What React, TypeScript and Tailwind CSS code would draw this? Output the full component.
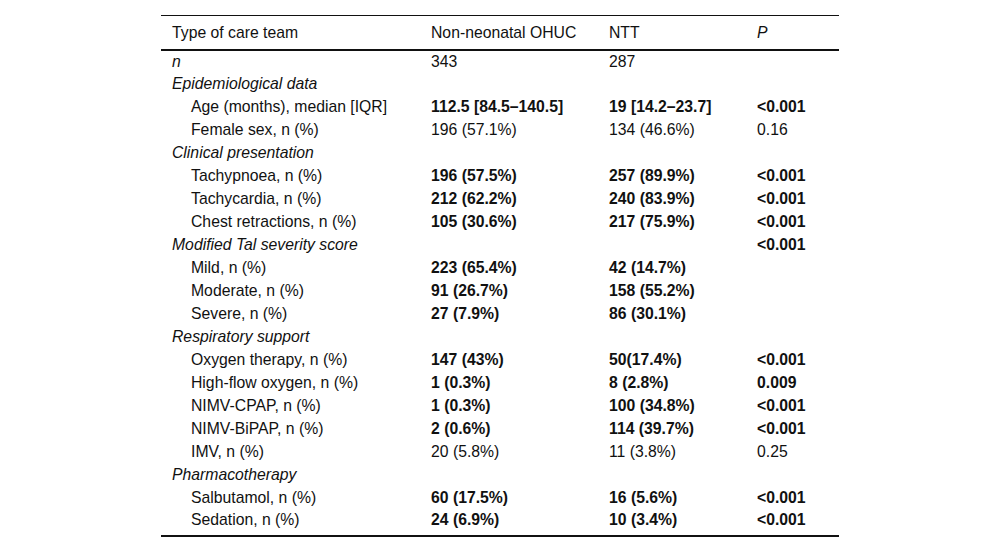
type Row = {
  label: string;
  kind: "group" | "item" | "n";
  a?: string;
  b?: string;
  p?: string;
  boldA?: boolean;
  boldB?: boolean;
  boldP?: boolean;
};

const rows: Row[] = [
  { label: "n", kind: "n", a: "343", b: "287" },
  { label: "Epidemiological data", kind: "group" },
  { label: "Age (months), median [IQR]", kind: "item", a: "112.5 [84.5–140.5]", b: "19 [14.2–23.7]", p: "<0.001", boldA: true, boldB: true, boldP: true },
  { label: "Female sex, n (%)", kind: "item", a: "196 (57.1%)", b: "134 (46.6%)", p: "0.16" },
  { label: "Clinical presentation", kind: "group" },
  { label: "Tachypnoea, n (%)", kind: "item", a: "196 (57.5%)", b: "257 (89.9%)", p: "<0.001", boldA: true, boldB: true, boldP: true },
  { label: "Tachycardia, n (%)", kind: "item", a: "212 (62.2%)", b: "240 (83.9%)", p: "<0.001", boldA: true, boldB: true, boldP: true },
  { label: "Chest retractions, n (%)", kind: "item", a: "105 (30.6%)", b: "217 (75.9%)", p: "<0.001", boldA: true, boldB: true, boldP: true },
  { label: "Modified Tal severity score", kind: "group", p: "<0.001", boldP: true },
  { label: "Mild, n (%)", kind: "item", a: "223 (65.4%)", b: "42 (14.7%)", boldA: true, boldB: true },
  { label: "Moderate, n (%)", kind: "item", a: "91 (26.7%)", b: "158 (55.2%)", boldA: true, boldB: true },
  { label: "Severe, n (%)", kind: "item", a: "27 (7.9%)", b: "86 (30.1%)", boldA: true, boldB: true },
  { label: "Respiratory support", kind: "group" },
  { label: "Oxygen therapy, n (%)", kind: "item", a: "147 (43%)", b: "50(17.4%)", p: "<0.001", boldA: true, boldB: true, boldP: true },
  { label: "High-flow oxygen, n (%)", kind: "item", a: "1 (0.3%)", b: "8 (2.8%)", p: "0.009", boldA: true, boldB: true, boldP: true },
  { label: "NIMV-CPAP, n (%)", kind: "item", a: "1 (0.3%)", b: "100 (34.8%)", p: "<0.001", boldA: true, boldB: true, boldP: true },
  { label: "NIMV-BiPAP, n (%)", kind: "item", a: "2 (0.6%)", b: "114 (39.7%)", p: "<0.001", boldA: true, boldB: true, boldP: true },
  { label: "IMV, n (%)", kind: "item", a: "20 (5.8%)", b: "11 (3.8%)", p: "0.25" },
  { label: "Pharmacotherapy", kind: "group" },
  { label: "Salbutamol, n (%)", kind: "item", a: "60 (17.5%)", b: "16 (5.6%)", p: "<0.001", boldA: true, boldB: true, boldP: true },
  { label: "Sedation, n (%)", kind: "item", a: "24 (6.9%)", b: "10 (3.4%)", p: "<0.001", boldA: true, boldB: true, boldP: true },
];

const App = () => {
  return (
    <div className="w-[1000px] h-[553px] bg-white pt-[15px] font-['Liberation_Sans',Arial,sans-serif] text-[15.75px] leading-[20px] text-[#111]">
      <table className="mx-auto w-[678px] border-collapse table-fixed">
        <colgroup>
          <col className="w-[259px]" />
          <col className="w-[178px]" />
          <col className="w-[148px]" />
          <col className="w-[93px]" />
        </colgroup>
        <thead>
          <tr className="border-t border-t-[#111] border-b-2 border-b-[#111] h-[34px]">
            <th className="text-left font-normal pl-[11px] pt-[1px]">Type of care team</th>
            <th className="text-left font-normal pl-[11px] pt-[1px]">Non-neonatal OHUC</th>
            <th className="text-left font-normal pl-[11px] pt-[1px]">NTT</th>
            <th className="text-left font-normal italic pl-[11px] pt-[1px]">P</th>
          </tr>
        </thead>
        <tbody className="border-b-2 border-b-[#111]">
          {rows.map((r, i) => (
            <tr key={i} className={i === rows.length - 1 ? "h-[26px] align-top" : "h-[23px]"}>
              <td className={r.kind === "item" ? "pl-[30px]" : "pl-[11px] italic"}>{r.label}</td>
              <td className={r.boldA ? "pl-[11px] font-bold" : "pl-[11px]"}>{r.a}</td>
              <td className={r.boldB ? "pl-[11px] font-bold" : "pl-[11px]"}>{r.b}</td>
              <td className={r.boldP ? "pl-[11px] font-bold" : "pl-[11px]"}>{r.p}</td>
            </tr>
          ))}
        </tbody>
      </table>
    </div>
  );
};

export default App;
